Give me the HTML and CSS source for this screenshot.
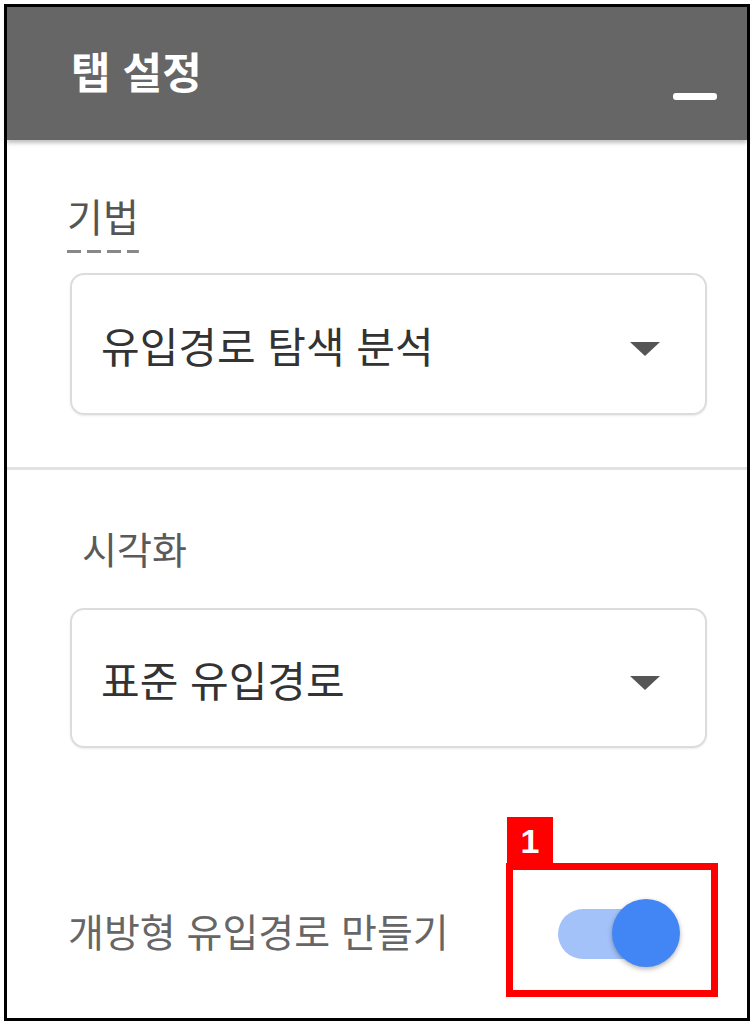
FILE: index.html
```html
<!DOCTYPE html>
<html lang="ko">
<head>
    <meta charset="UTF-8">
    <meta name="viewport" content="width=device-width, initial-scale=1.0">
    <title>탭 설정</title>
    <link rel="stylesheet" href="styles.css">
</head>
<body>
    <div class="panel">
        <div class="panel-header">
            <h1>탭 설정</h1>
            <span class="minimize"></span>
        </div>

        <div class="section section-first">
            <span class="field-label dashed">기법</span>
            <div class="select">
                <span>유입경로 탐색 분석</span>
                <span class="caret"></span>
            </div>
        </div>

        <div class="section section-second">
            <span class="field-label indent">시각화</span>
            <div class="select">
                <span>표준 유입경로</span>
                <span class="caret"></span>
            </div>
        </div>

        <div class="toggle-row">
            <span class="toggle-label">개방형 유입경로 만들기</span>
            <div class="highlight">
                <span class="badge">1</span>
                <div class="switch">
                    <span class="track"></span>
                    <span class="thumb"></span>
                </div>
            </div>
        </div>
    </div>
</body>
</html>
```

FILE: styles.css
```css
body {
    margin: 0;
    background: #ffffff;
    font-family: "Noto Sans CJK KR", "Noto Sans", sans-serif;
}

.panel {
    box-sizing: border-box;
    width: 746px;
    height: 1017px;
    margin: 4px;
    border: 3px solid #000;
    background: #fff;
    display: flex;
    flex-direction: column;
}

.panel-header {
    height: 133px;
    background: #666666;
    display: flex;
    justify-content: space-between;
    padding: 0 30px 0 64px;
    box-shadow: 0 3px 4px rgba(0, 0, 0, 0.25);
    position: relative;
}

.panel-header h1 {
    margin: 0;
    align-self: center;
    color: #fff;
    font-size: 43px;
    font-weight: 700;
    letter-spacing: 0;
    line-height: 1;
    margin-top: -6px;
}

.minimize {
    align-self: flex-end;
    width: 44px;
    height: 7px;
    margin-bottom: 40px;
    background: #fff;
    border-radius: 3px;
}

.section {
    display: flex;
    flex-direction: column;
    align-items: flex-start;
}

.section-first {
    padding: 56px 0 52px;
    border-bottom: 3px solid #e2e2e2;
}

.section-second {
    padding-top: 59px;
}

.field-label {
    font-size: 38px;
    line-height: 1;
    color: #555;
    margin-left: 60px;
}

.field-label.dashed {
    font-size: 39px;
    padding-bottom: 18px;
    background: repeating-linear-gradient(to right, #888 0 14px, transparent 14px 20px) bottom / 100% 3px no-repeat;
}

.field-label.indent {
    margin-left: 75px;
    color: #5a5a5a;
}

.select {
    box-sizing: border-box;
    width: 637px;
    height: 142px;
    margin-left: 63px;
    margin-top: 20px;
    border: 2px solid #dcdcdc;
    border-radius: 14px;
    box-shadow: 0 1px 2px rgba(0, 0, 0, 0.08);
    display: flex;
    align-items: center;
    justify-content: space-between;
    padding: 0 45px 0 29px;
    font-size: 42px;
    color: #333;
}

.section-second .select {
    margin-top: 41px;
    height: 140px;
}

.caret {
    width: 0;
    height: 0;
    border-left: 15px solid transparent;
    border-right: 15px solid transparent;
    border-top: 14px solid #555;
    margin-top: 10px;
}

.toggle-row {
    display: flex;
    align-items: center;
    justify-content: space-between;
    margin-top: 115px;
    padding: 0 29px 0 61px;
}

.toggle-label {
    font-size: 39px;
    color: #666;
}

.highlight {
    position: relative;
    box-sizing: border-box;
    width: 212px;
    height: 134px;
    border: 7px solid #ff0000;
    display: flex;
    align-items: center;
    justify-content: center;
}

.badge {
    position: absolute;
    left: -6px;
    top: -53px;
    width: 46px;
    height: 46px;
    background: #ff0000;
    color: #fff;
    font-family: "Liberation Sans", Arial, sans-serif;
    font-weight: 700;
    font-size: 34px;
    line-height: 48px;
    text-align: center;
}

.switch {
    position: relative;
    width: 122px;
    height: 68px;
    margin-left: 14px;
    margin-top: 6px;
}

.track {
    position: absolute;
    left: 0;
    top: 10px;
    width: 100px;
    height: 50px;
    border-radius: 25px;
    background: #a2c2f9;
}

.thumb {
    position: absolute;
    right: 0;
    top: 0;
    width: 68px;
    height: 68px;
    border-radius: 50%;
    background: #4285f4;
    box-shadow: 0 2px 5px rgba(0, 0, 0, 0.3);
}
```
